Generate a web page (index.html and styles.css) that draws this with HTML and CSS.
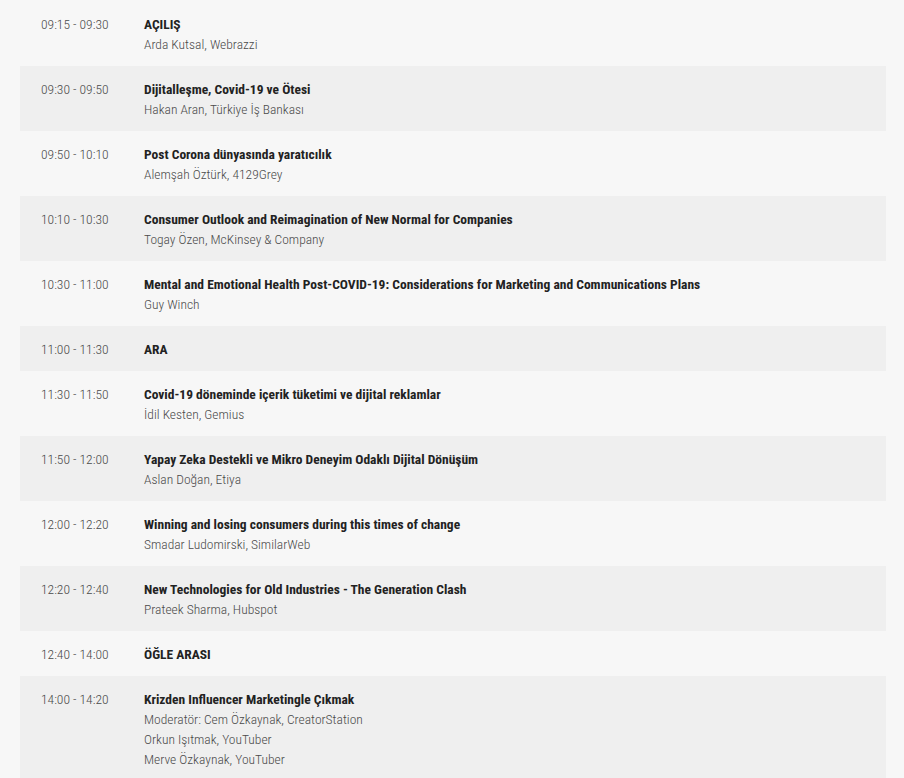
FILE: index.html
```html
<!DOCTYPE html>
<html lang="tr"><head><meta charset="utf-8"><link rel="stylesheet" href="styles.css"></head>
<body>
<div class="agenda">
  <div class="row">
    <div class="time">09:15 - 09:30</div>
    <div class="info"><div class="title">AÇILIŞ</div><div class="who">Arda Kutsal, Webrazzi</div></div>
  </div>
  <div class="row alt">
    <div class="time">09:30 - 09:50</div>
    <div class="info"><div class="title">Dijitalleşme, Covid-19 ve Ötesi</div><div class="who">Hakan Aran, Türkiye İş Bankası</div></div>
  </div>
  <div class="row">
    <div class="time">09:50 - 10:10</div>
    <div class="info"><div class="title">Post Corona dünyasında yaratıcılık</div><div class="who">Alemşah Öztürk, 4129Grey</div></div>
  </div>
  <div class="row alt">
    <div class="time">10:10 - 10:30</div>
    <div class="info"><div class="title">Consumer Outlook and Reimagination of New Normal for Companies</div><div class="who">Togay Özen, McKinsey &amp; Company</div></div>
  </div>
  <div class="row">
    <div class="time">10:30 - 11:00</div>
    <div class="info"><div class="title">Mental and Emotional Health Post-COVID-19: Considerations for Marketing and Communications Plans</div><div class="who">Guy Winch</div></div>
  </div>
  <div class="row alt">
    <div class="time">11:00 - 11:30</div>
    <div class="info"><div class="title">ARA</div></div>
  </div>
  <div class="row">
    <div class="time">11:30 - 11:50</div>
    <div class="info"><div class="title">Covid-19 döneminde içerik tüketimi ve dijital reklamlar</div><div class="who">İdil Kesten, Gemius</div></div>
  </div>
  <div class="row alt">
    <div class="time">11:50 - 12:00</div>
    <div class="info"><div class="title">Yapay Zeka Destekli ve Mikro Deneyim Odaklı Dijital Dönüşüm</div><div class="who">Aslan Doğan, Etiya</div></div>
  </div>
  <div class="row">
    <div class="time">12:00 - 12:20</div>
    <div class="info"><div class="title">Winning and losing consumers during this times of change</div><div class="who">Smadar Ludomirski, SimilarWeb</div></div>
  </div>
  <div class="row alt">
    <div class="time">12:20 - 12:40</div>
    <div class="info"><div class="title">New Technologies for Old Industries - The Generation Clash</div><div class="who">Prateek Sharma, Hubspot</div></div>
  </div>
  <div class="row">
    <div class="time">12:40 - 14:00</div>
    <div class="info"><div class="title">ÖĞLE ARASI</div></div>
  </div>
  <div class="row alt">
    <div class="time">14:00 - 14:20</div>
    <div class="info"><div class="title">Krizden Influencer Marketingle Çıkmak</div><div class="who">Moderatör: Cem Özkaynak, CreatorStation</div><div class="who">Orkun Işıtmak, YouTuber</div><div class="who">Merve Özkaynak, YouTuber</div></div>
  </div>
</div>
</body></html>
```
FILE: styles.css
```css
body{margin:0;background:#f7f7f7;font-family:"Roboto Condensed",Roboto,sans-serif;font-stretch:75%;color:#333}
.agenda{padding:1px 18px 0 20px}
.row{display:flex;padding:13px 0 12px 21px;line-height:20px}
.row.alt{background:#efefef}
.time{width:103px;flex:none;font-size:13.5px;font-weight:300;color:#4a4a4a}
.title{font-size:13.5px;font-weight:700;color:#222}
.who{font-size:13.5px;font-weight:300;color:#4a4a4a}
```
